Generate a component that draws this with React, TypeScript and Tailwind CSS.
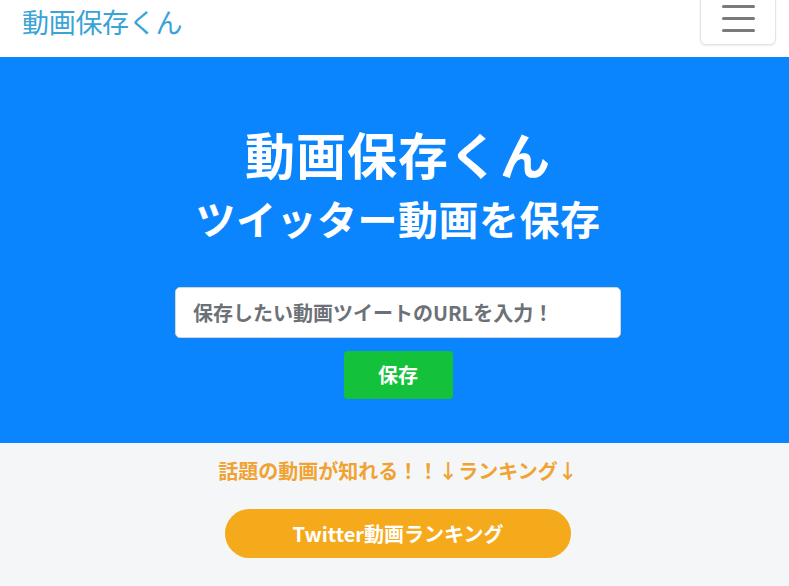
const jp = { fontFamily: '"Noto Sans CJK JP", "Noto Sans", sans-serif' };

export default function App() {
  return (
    <div className="min-h-[586px] bg-[#f5f6f8]" style={jp}>
      <header className="flex h-[57px] items-start justify-between bg-white pl-[22px] pr-[13px]">
        <a className="mt-[4px] text-[27px] leading-[36px] tracking-[-0.3px] text-[#3aa3d8]">動画保存くん</a>
        <button className="-mt-[8px] flex h-[53px] w-[76px] flex-col items-center justify-center gap-[9px] rounded-[6px] border border-[#e3e3e3] bg-white shadow-[0_1px_2px_rgba(0,0,0,0.08)]">
          <span className="block h-[3px] w-[33px] rounded bg-[#7a7a7a]" />
          <span className="block h-[3px] w-[33px] rounded bg-[#7a7a7a]" />
          <span className="block h-[3px] w-[33px] rounded bg-[#7a7a7a]" />
        </button>
      </header>

      <section className="flex h-[386px] flex-col items-center bg-[#0b85fd] pl-[7px] pt-[71px] text-white">
        <h1 className="text-[50px] font-bold leading-[1] tracking-[1px]">動画保存くん</h1>
        <h2 className="mt-[20px] text-[40px] font-bold leading-[1] tracking-[0.5px]">ツイッター動画を保存</h2>
        <input
          className="mt-[49px] h-[51px] w-[446px] rounded-[5px] border border-[#cfd6de] bg-white px-[17px] text-[20px] font-bold text-[#333] outline-none placeholder:text-[#6c7177]"
          placeholder="保存したい動画ツイートのURLを入力！"
        />
        <button className="mt-[13px] h-[48px] w-[109px] rounded-[4px] bg-[#13c23a] text-[20px] font-bold text-white">
          保存
        </button>
      </section>

      <section className="flex flex-col items-center pl-[7px] pt-[16px]">
        <p className="text-[20px] font-bold leading-[24px] text-[#f0a332]">話題の動画が知れる！！↓ランキング↓</p>
        <a className="mt-[26px] flex h-[49px] w-[346px] items-center justify-center rounded-full bg-[#f5aa1b] text-[20px] font-bold text-white">
          Twitter動画ランキング
        </a>
      </section>
    </div>
  );
}
